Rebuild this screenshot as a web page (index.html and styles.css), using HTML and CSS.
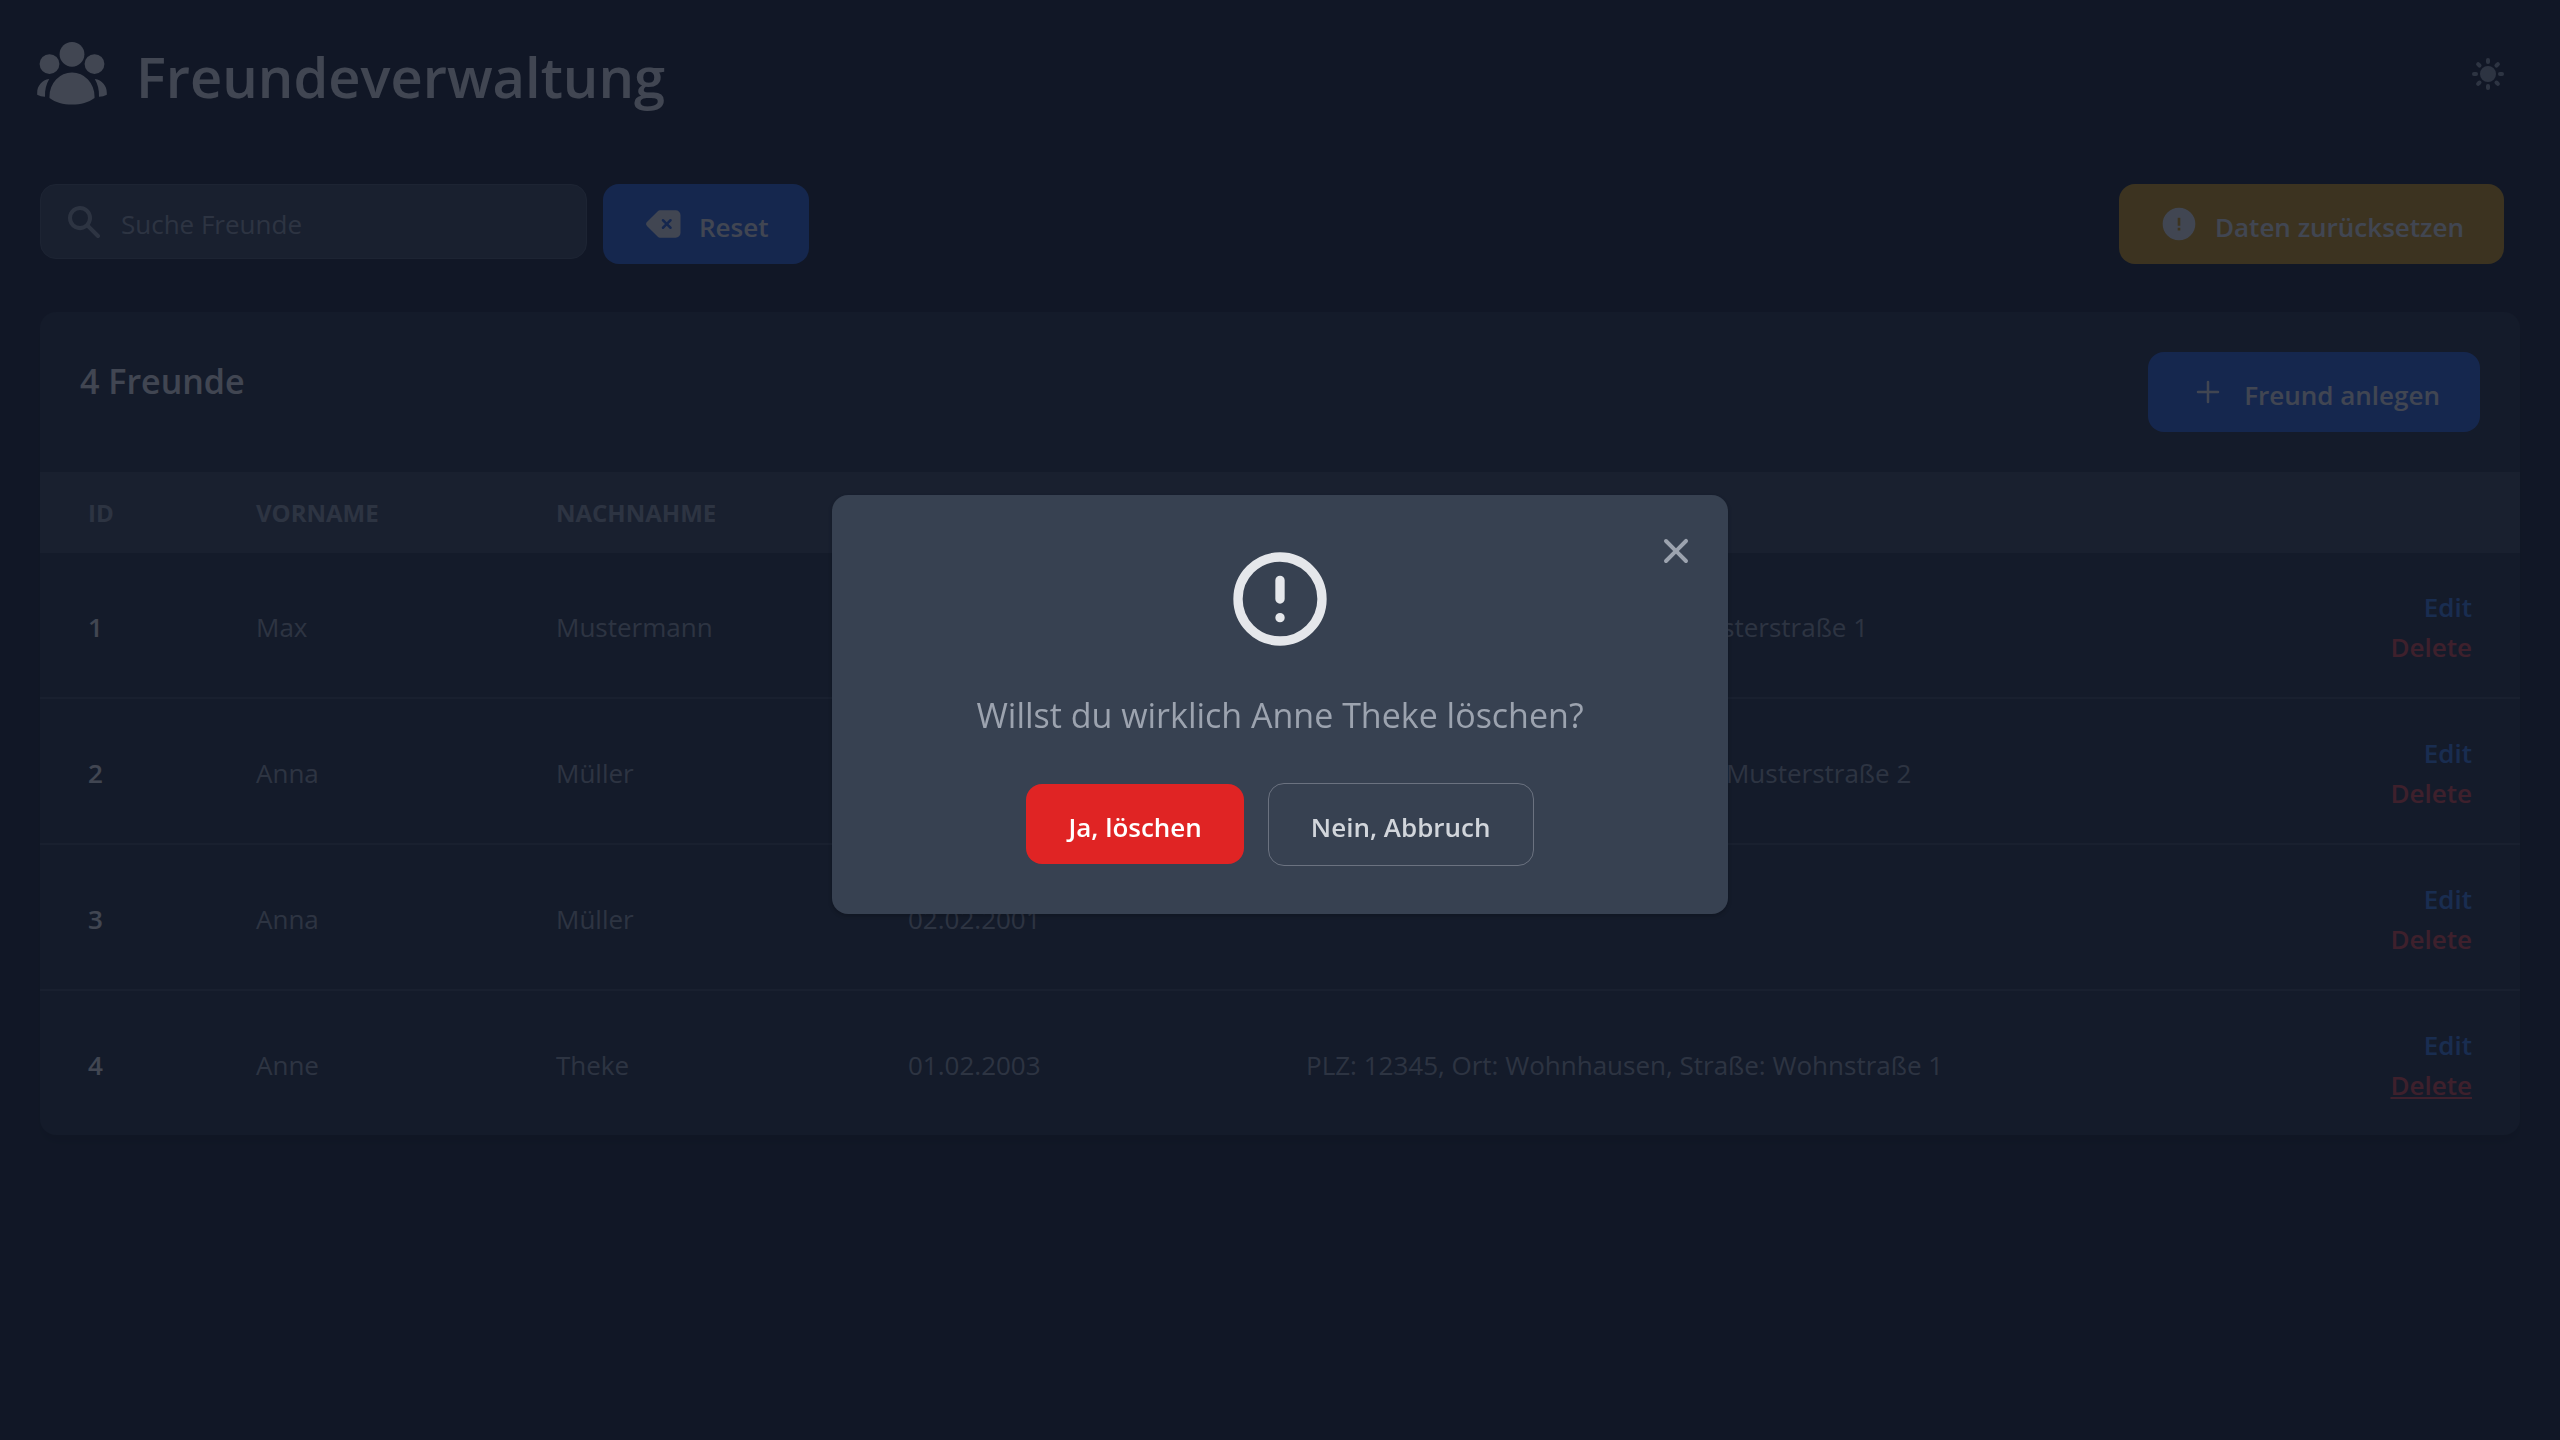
FILE: index.html
```html
<!DOCTYPE html>
<html lang="de">
<head>
<meta charset="utf-8">
<title>Freundeverwaltung</title>
<link rel="stylesheet" href="styles.css">
</head>
<body>
<div class="page">
  <header class="topbar">
    <svg class="brand-icon" viewBox="0 0 24 24" fill="currentColor" aria-hidden="true"><circle cx="12" cy="5.435" r="4.125"/><circle cx="4.5" cy="8.7" r="3.3"/><circle cx="19.5" cy="8.7" r="3.3"/><path d="M4.5 19.5a7.5 8 0 0 1 15 0v.5C17.500 21.500 14.900 22.200 12 22.200S6.500 21.500 4.500 20Z"/><path d="M4.400 13.700C2 14 .400 16 .400 18.300v.600c.800.400 1.600.600 2.600.700C2.900 17.300 3.400 15.400 4.400 13.700Z"/><path d="M19.600 13.700c2.400.300 4 2.300 4 4.600v.600c-.800.400-1.600.600-2.600.700.100-2.300-.400-4.200-1.400-5.900Z"/></svg>
    <h1 class="title">Freundeverwaltung</h1>
    <button class="theme-toggle" type="button" aria-label="Farbschema wechseln">
      <svg viewBox="0 0 20 20" fill="currentColor" aria-hidden="true"><path d="M10 2a1 1 0 011 1v1a1 1 0 11-2 0V3a1 1 0 011-1zm4 8a4 4 0 11-8 0 4 4 0 018 0zm-.464 4.950.707.707a1 1 0 001.414-1.414l-.707-.707a1 1 0 00-1.414 1.414zm2.120-10.607a1 1 0 010 1.414l-.706.707a1 1 0 11-1.414-1.414l.707-.707a1 1 0 011.414 0zM17 11a1 1 0 100-2h-1a1 1 0 100 2h1zm-7 4a1 1 0 011 1v1a1 1 0 11-2 0v-1a1 1 0 011-1zM5.050 6.464A1 1 0 106.465 5.050l-.708-.707a1 1 0 00-1.414 1.414l.707.707zm1.414 8.486-.707.707a1 1 0 01-1.414-1.414l.707-.707a1 1 0 011.414 1.414zM4 11a1 1 0 100-2H3a1 1 0 000 2h1z"/></svg>
    </button>
  </header>

  <div class="toolbar">
    <form class="search">
      <label class="search-label" for="search" aria-label="Suche Freunde">
        <svg viewBox="0 0 20 20" fill="currentColor" aria-hidden="true"><path fill-rule="evenodd" d="M8 4a4 4 0 100 8 4 4 0 000-8zM2 8a6 6 0 1110.890 3.476l4.817 4.817a1 1 0 01-1.414 1.414l-4.816-4.816A6 6 0 012 8z" clip-rule="evenodd"/></svg>
      </label>
      <input class="search-input" id="search" type="text" placeholder="Suche Freunde">
    </form>
    <button class="btn btn-primary" type="button">
      <svg class="btn-icon" viewBox="0 0 24 24" fill="currentColor" aria-hidden="true"><path fill-rule="evenodd" d="M2.515 10.674a1.875 1.875 0 0 0 0 2.652L8.890 19.700c.352.351.829.549 1.326.549H19.500a3 3 0 0 0 3-3V6.750a3 3 0 0 0-3-3h-9.284c-.497 0-.974.198-1.326.550l-6.375 6.374ZM12.530 9.220a.750.750 0 1 0-1.060 1.060L13.190 12l-1.720 1.720a.750.750 0 1 0 1.060 1.060l1.720-1.720 1.720 1.720a.750.750 0 1 0 1.060-1.060L15.310 12l1.720-1.720a.750.750 0 1 0-1.060-1.060l-1.720 1.720-1.720-1.720Z" clip-rule="evenodd"/></svg>
      <span>Reset</span>
    </button>
    <button class="btn btn-warning" type="button">
      <svg class="btn-icon" viewBox="0 0 24 24" fill="currentColor" aria-hidden="true"><path fill-rule="evenodd" d="M12 2.200a9.800 9.800 0 1 0 0 19.600 9.800 9.800 0 0 0 0-19.600ZM11.200 8.200h1.600v4.800h-1.600V8.200Zm0 6.100h1.600v1.600h-1.600v-1.600Z" clip-rule="evenodd"/></svg>
      <span>Daten zurücksetzen</span>
    </button>
  </div>

  <main class="card">
    <div class="card-head">
      <h2 class="card-title">4 Freunde</h2>
      <button class="btn btn-primary" type="button">
        <svg class="btn-icon" viewBox="0 0 24 24" fill="none" stroke="currentColor" stroke-width="1.500" stroke-linecap="round" aria-hidden="true"><path d="M12 6v12M6 12h12"/></svg>
        <span>Freund anlegen</span>
      </button>
    </div>
    <table class="friends">
      <colgroup><col class="col-id"><col class="col-first"><col class="col-last"><col class="col-birth"><col><col class="col-actions"></colgroup>
      <thead>
        <tr><th>ID</th><th>Vorname</th><th>Nachnahme</th><th>Geburtsdatum</th><th>Adresse</th><th></th></tr>
      </thead>
      <tbody>
        <tr><th scope="row">1</th><td>Max</td><td>Mustermann</td><td>01.01.2000</td><td>PLZ: 12345, Ort: Berlin, Straße: Musterstraße 1</td><td class="actions"><a class="edit" href="#">Edit</a><a class="delete" href="#">Delete</a></td></tr>
        <tr><th scope="row">2</th><td>Anna</td><td>Müller</td><td>02.02.2001</td><td>PLZ: 12345, Ort: Hamburg, Straße: Musterstraße 2</td><td class="actions"><a class="edit" href="#">Edit</a><a class="delete" href="#">Delete</a></td></tr>
        <tr><th scope="row">3</th><td>Anna</td><td>Müller</td><td>02.02.2001</td><td></td><td class="actions"><a class="edit" href="#">Edit</a><a class="delete" href="#">Delete</a></td></tr>
        <tr><th scope="row">4</th><td>Anne</td><td>Theke</td><td>01.02.2003</td><td>PLZ: 12345, Ort: Wohnhausen, Straße: Wohnstraße 1</td><td class="actions"><a class="edit" href="#">Edit</a><a class="delete active" href="#">Delete</a></td></tr>
      </tbody>
    </table>
  </main>
</div>

<div class="overlay">
  <div class="modal" role="dialog" aria-modal="true" aria-labelledby="question">
    <button class="modal-close" type="button" aria-label="Schließen">
      <svg viewBox="0 0 20 20" fill="currentColor" aria-hidden="true"><path fill-rule="evenodd" d="M4.293 4.293a1 1 0 011.414 0L10 8.586l4.293-4.293a1 1 0 111.414 1.414L11.414 10l4.293 4.293a1 1 0 01-1.414 1.414L10 11.414l-4.293 4.293a1 1 0 01-1.414-1.414L8.586 10 4.293 5.707a1 1 0 010-1.414z" clip-rule="evenodd"/></svg>
    </button>
    <svg class="modal-icon" viewBox="0 0 24 24" fill="none" stroke="currentColor" stroke-width="2" stroke-linecap="round" stroke-linejoin="round" aria-hidden="true"><path d="M12 8v4m0 4h.010M21 12a9 9 0 11-18 0 9 9 0 0118 0z"/></svg>
    <p class="question" id="question">Willst du wirklich Anne Theke löschen?</p>
    <div class="modal-actions">
      <button class="btn btn-danger" type="button"><span>Ja, löschen</span></button>
      <button class="btn btn-outline" type="button"><span>Nein, Abbruch</span></button>
    </div>
  </div>
</div>
</body>
</html>
```
FILE: styles.css
```css
* { box-sizing: border-box; }

body {
  margin: 0;
  min-height: 100vh;
  background: #111827;
  color: #9ca3af;
  font: 400 26px/40px "Open Sans", "Noto Sans", sans-serif;
}

h1, h2, p { margin: 0; }
svg { display: block; }
button, input { font: inherit; }
button { cursor: pointer; }

.page { padding: 24px 40px; }

.topbar {
  display: flex;
  align-items: center;
  gap: 28px;
  height: 100px;
}
.brand-icon { width: 72px; height: 72px; margin-left: -4px; color: #fff; }
.title { padding-top: 4px; color: #fff; font-size: 56px; line-height: 72px; font-weight: 600; }
.theme-toggle {
  margin-left: auto;
  padding: 12px;
  border: 0;
  background: none;
  color: #9ca3af;
}
.theme-toggle svg { width: 40px; height: 40px; }

.toolbar {
  display: flex;
  align-items: flex-start;
  gap: 16px;
  padding: 60px 16px 48px 0;
}
.search {
  display: flex;
  align-items: center;
  width: 547px;
  height: 75px;
  border: 1px solid #4b5563;
  border-radius: 16px;
  background: #374151;
}
.search-label { padding: 0 17px 0 23px; }
.search-label svg { width: 40px; height: 40px; color: #9ca3af; }
.search-input {
  flex: 1;
  min-width: 0;
  padding: 4px 0 0;
  border: 0;
  outline: 0;
  background: none;
  color: #fff;
}
.search-input::placeholder { color: #9ca3af; opacity: 1; }

.btn {
  display: flex;
  align-items: center;
  gap: 16px;
  height: 80px;
  padding: 0 40px;
  border: 0;
  border-radius: 16px;
  color: #fff;
  font-weight: 600;
  white-space: nowrap;
}
.btn span { padding-top: 6px; }
.btn-icon { width: 40px; height: 40px; }
.btn-primary { background: #2563eb; }
.btn-warning { margin-left: auto; background: #e3a008; }
.btn-danger { background: #e02424; }
.btn-outline {
  height: 83px;
  border: 1px solid #6b7280;
  background: #374151;
  color: #d1d5db;
}

.card {
  overflow: hidden;
  border-radius: 16px;
  background: #1f2937;
  box-shadow: 0 8px 12px -2px rgba(0, 0, 0, .4);
}
.card-head {
  display: flex;
  justify-content: space-between;
  align-items: flex-start;
  padding: 40px;
}
.card-title { color: #fff; font-size: 34px; line-height: 58px; font-weight: 600; }

.friends { width: 100%; border-collapse: collapse; table-layout: fixed; text-align: left; }
.col-id { width: 168px; }
.col-first { width: 300px; }
.col-last { width: 352px; }
.col-birth { width: 398px; }
.col-actions { width: 247px; }
.friends thead { background: #374151; font-size: 24px; text-transform: uppercase; }
.friends thead th { height: 81px; padding: 0 48px; font-weight: 700; }
.friends tbody tr + tr { border-top: 2px solid #374151; }
.friends tbody th, .friends tbody td { padding: 34px 48px 30px; }
.friends tbody th { color: #fff; font-weight: 600; }
.friends .actions { text-align: right; font-weight: 600; }
.actions a { display: block; text-decoration: none; }
.actions .edit { color: #3b82f6; }
.actions .delete { color: #ef4444; }
.actions .active { text-decoration: underline; }

.overlay {
  position: fixed;
  inset: 0;
  display: flex;
  align-items: center;
  justify-content: center;
  padding-bottom: 32px;
  background: rgba(17, 24, 39, .8);
}
.modal {
  position: relative;
  display: flex;
  flex-direction: column;
  align-items: center;
  width: 896px;
  padding: 48px;
  border-radius: 16px;
  background: #374151;
  box-shadow: 0 2px 4px rgba(0, 0, 0, .2);
}
.modal-close {
  position: absolute;
  top: 24px;
  right: 20px;
  padding: 12px;
  border: 0;
  background: none;
  color: #9ca3af;
}
.modal-close svg { width: 40px; height: 40px; }
.modal-icon { width: 112px; height: 112px; color: #e5e7eb; }
.question { padding: 32px 0 40px; font-size: 34px; line-height: 56px; }
.modal-actions { display: flex; align-items: center; gap: 24px; }
.modal-actions .btn { padding: 0 42px; }
```
